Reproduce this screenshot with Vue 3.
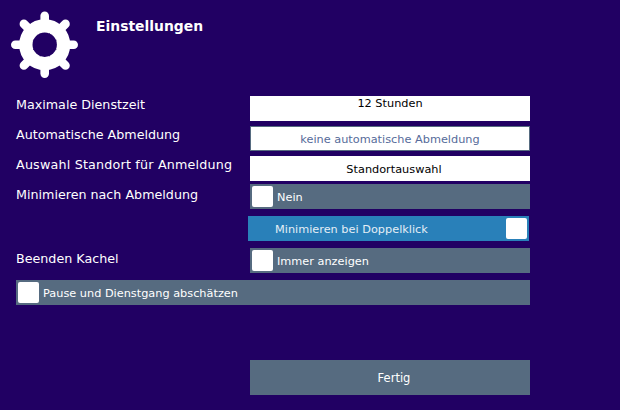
<template>
  <div class="page">
    <header class="head">
      <svg class="gear" width="68" height="68" viewBox="0 0 68 68">
        <g stroke="#fff" stroke-width="8.6" stroke-linecap="round">
          <line x1="33.7" y1="4.8" x2="33.7" y2="62.6" />
          <line x1="4.3" y1="33.7" x2="62.7" y2="33.7" />
          <line x1="12.9" y1="12.9" x2="54.5" y2="54.5" />
          <line x1="54.5" y1="12.9" x2="12.9" y2="54.5" />
        </g>
        <circle cx="33.7" cy="33.7" r="19" fill="none" stroke="#fff" stroke-width="13" />
        <circle cx="33.7" cy="33.7" r="12.2" fill="#210063" />
      </svg>
      <h1 class="title">Einstellungen</h1>
    </header>

    <div class="row">
      <span class="label">Maximale Dienstzeit</span>
      <div class="field top">12 Stunden</div>
    </div>
    <div class="row">
      <span class="label">Automatische Abmeldung</span>
      <div class="field outlined">keine automatische Abmeldung</div>
    </div>
    <div class="row">
      <span class="label spaced">Auswahl Standort für Anmeldung</span>
      <div class="field shifted">Standortauswahl</div>
    </div>
    <div class="row tight">
      <span class="label low">Minimieren nach Abmeldung</span>
      <div class="toggle"><span class="knob"></span><span class="text">Nein</span></div>
    </div>
    <div class="row double">
      <span class="label"></span>
      <div class="toggle on">
        <span class="text">Minimieren bei Doppelklick</span>
        <span class="knob"></span>
      </div>
    </div>
    <div class="row double">
      <span class="label low">Beenden Kachel</span>
      <div class="toggle"><span class="knob"></span><span class="text">Immer anzeigen</span></div>
    </div>
    <div class="toggle wide"><span class="knob"></span><span class="text">Pause und Dienstgang abschätzen</span></div>

    <div class="footer">
      <button class="done" type="button">Fertig</button>
    </div>
  </div>
</template>

<script setup>
</script>

<style scoped>
.page {
  width: 620px;
  height: 410px;
  box-sizing: border-box;
  padding: 11px 0 0 11px;
  background: #210063;
  color: #fff;
  font-family: "DejaVu Sans", sans-serif;
  font-size: 12.7px;
  overflow: hidden;
}
.head {
  display: flex;
  height: 85px;
}
.gear {
  flex-shrink: 0;
}
.title {
  margin: 6px 0 0 17px;
  font-size: 13.9px;
  font-weight: bold;
  line-height: 18px;
}
.row {
  display: flex;
  width: 519px;
  height: 25px;
  margin-bottom: 5px;
  padding-left: 5px;
}
.row.tight {
  margin-top: -2px;
  margin-bottom: 7px;
}
.row.double {
  margin-bottom: 7px;
}
.label {
  width: 234px;
  flex-shrink: 0;
  line-height: 18px;
}
.label.low {
  padding-top: 2px;
}
.label.spaced {
  letter-spacing: 0.2px;
}
.field {
  width: 280px;
  box-sizing: border-box;
  padding-top: 1px;
  background: #fff;
  color: #000;
  font-size: 11.3px;
  line-height: 25px;
  text-align: center;
}
.field.top {
  padding-top: 0;
  line-height: 15px;
}
.field.outlined {
  border: 1px solid #566b80;
  color: #566b9a;
  line-height: 23px;
}
.field.shifted {
  padding-left: 8px;
}
.toggle {
  display: flex;
  align-items: center;
  gap: 4px;
  width: 280px;
  height: 25px;
  box-sizing: border-box;
  padding-left: 2px;
  background: #566b80;
  font-size: 11.3px;
}
.toggle.on {
  width: 281px;
  margin-left: -2px;
  padding: 0 2px 0 27px;
  justify-content: space-between;
  background: #2980b9;
  color: #e4eef6;
}
.toggle.wide {
  width: 514px;
  margin-left: 5px;
}
.text {
  margin-top: 2px;
}
.knob {
  width: 21px;
  height: 21px;
  background: #fff;
  border-radius: 2px;
  flex-shrink: 0;
}
.footer {
  margin: 55px 0 0 239px;
}
.done {
  display: block;
  width: 280px;
  height: 35px;
  padding: 0 0 0 8px;
  border: 0;
  background: #566b80;
  color: #fff;
  font: inherit;
  font-size: 11.5px;
}
</style>
